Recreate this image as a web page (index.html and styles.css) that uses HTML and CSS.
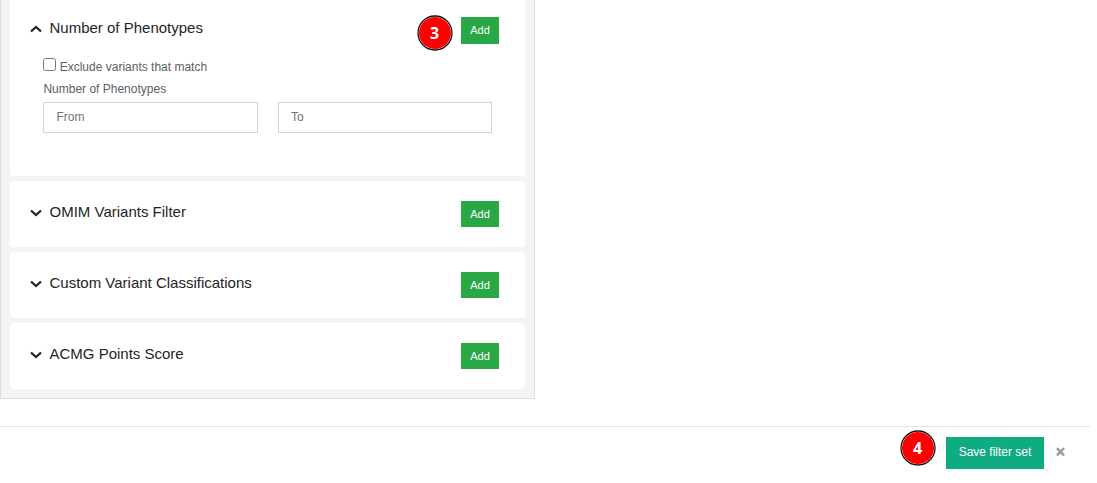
FILE: index.html
```html
<!DOCTYPE html>
<html lang="en">
<head>
<meta charset="utf-8">
<title>Filter set</title>
<link rel="stylesheet" href="styles.css">
</head>
<body>
<main class="panel">
  <section class="card card-open">
    <header class="card-head">
      <svg class="chevron" viewBox="0 0 12 8"><path d="M1 6.500 6 2l5 4.500"/></svg>
      <h2 class="title">Number of Phenotypes</h2>
      <svg class="step step-add" viewBox="0 0 36 36"><circle class="halo" cx="18" cy="18" r="17"/><circle class="disc" cx="18" cy="18" r="16"/><text class="digit" x="17.700" y="23.800">3</text></svg>
      <button class="add">Add</button>
    </header>
    <div class="card-body">
      <label class="check"><input class="box" type="checkbox"><span>Exclude variants that match</span></label>
      <div class="label">Number of Phenotypes</div>
      <div class="range">
        <input class="field field-from" type="text" placeholder="From">
        <input class="field" type="text" placeholder="To">
      </div>
    </div>
  </section>
  <section class="card">
    <header class="card-head">
      <svg class="chevron" viewBox="0 0 12 8"><path d="M1 1.500 6 6l5-4.500"/></svg>
      <h2 class="title">OMIM Variants Filter</h2>
      <button class="add">Add</button>
    </header>
  </section>
  <section class="card">
    <header class="card-head">
      <svg class="chevron" viewBox="0 0 12 8"><path d="M1 1.500 6 6l5-4.500"/></svg>
      <h2 class="title">Custom Variant Classifications</h2>
      <button class="add">Add</button>
    </header>
  </section>
  <section class="card">
    <header class="card-head">
      <svg class="chevron" viewBox="0 0 12 8"><path d="M1 1.500 6 6l5-4.500"/></svg>
      <h2 class="title">ACMG Points Score</h2>
      <button class="add">Add</button>
    </header>
  </section>
</main>
<footer class="footer">
  <svg class="step step-save" viewBox="0 0 36 36"><circle class="halo" cx="18" cy="18" r="17"/><circle class="disc" cx="18" cy="18" r="16"/><text class="digit" x="17.700" y="23.800">4</text></svg>
  <button class="save">Save filter set</button>
  <button class="close" aria-label="Close"><svg class="cross" viewBox="0 0 10 10"><path d="M1 1.300l8 8M9 1.300l-8 8"/></svg></button>
</footer>
</body>
</html>
```
FILE: styles.css
```css
* { box-sizing: border-box; }

body {
  margin: 0;
  height: 483px;
  overflow: hidden;
  background: #fff;
  color: #212529;
  font-family: "Liberation Sans", Arial, sans-serif;
  font-size: 12px;
}

.panel {
  display: flex;
  flex-direction: column;
  gap: 5px;
  width: 535px;
  height: 399px;
  padding: 0 9px 9px;
  background: #f4f4f4;
  border: 1px solid #dedede;
  border-top: 0;
}

.card {
  height: 66px;
  padding: 20px 26px 0 20px;
  background: #fff;
  border-radius: 4px;
}

.card-open {
  height: 176px;
  padding-top: 17px;
  border-radius: 0 0 4px 4px;
}

.card-head {
  display: flex;
  align-items: flex-start;
  height: 26px;
}

.card-open .card-head { height: 27px; }

.chevron {
  width: 12px;
  height: 8px;
  margin: 8px 7.500px 0 0;
  fill: none;
  stroke: #212529;
  stroke-width: 2.300;
}

.title {
  flex: 1;
  margin: 2px 0 0;
  font-size: 15px;
  font-weight: 400;
  line-height: 18px;
}

.add {
  width: 38px;
  height: 100%;
  padding: 0;
  border: 0;
  background: #28a745;
  color: #fff;
  font: 11px/26px "Liberation Sans", Arial, sans-serif;
}

.card-open .add { padding-bottom: 1px; }

.step {
  flex: none;
  width: 36px;
  height: 36px;
}

.step-add { margin: -2px 8px 0 0; }
.step-save { margin: 3px 10px 0 0; }

.halo {
  fill: #fff;
  stroke: #111;
  stroke-width: 1.300;
}

.disc { fill: #f00; }

.digit {
  fill: #fff;
  font: 700 16px "Open Sans", sans-serif;
  text-anchor: middle;
}

.card-body { padding: 14px 7px 0 13px; color: #5b5f63; }

.check {
  display: flex;
  height: 19px;
}

.check span { margin-top: 2px; line-height: 14px; }

.box {
  width: 13px;
  height: 13px;
  margin: 0 3.700px 0 0;
}

.label {
  margin-top: 5px;
  padding-left: 0.400px;
  height: 20px;
  line-height: 14px;
}

.range {
  display: grid;
  grid-template-columns: 215px 214px;
  gap: 20px;
}

.field {
  width: 100%;
  height: 31px;
  padding: 0 12px 1px;
  border: 1px solid #ced4da;
  border-radius: 0;
  background: #fff;
  font: 12px "Liberation Sans", Arial, sans-serif;
}

.field-from { padding-left: 12.400px; }

.field::placeholder { color: #6c757d; }

.footer {
  display: flex;
  align-items: flex-start;
  justify-content: flex-end;
  width: 1090px;
  margin-top: 27px;
  border-top: 1px solid #e3e3e3;
  padding-right: 25px;
}

.save {
  width: 98px;
  height: 32px;
  margin: 10px 12px 0 0;
  padding: 0 0 2px;
  border: 0;
  background: #0fac81;
  color: #fff;
  font: 12px "Liberation Sans", Arial, sans-serif;
}

.close {
  display: flex;
  width: 9px;
  height: 9px;
  margin-top: 20px;
  padding: 0;
  border: 0;
  background: none;
}

.cross {
  width: 9px;
  height: 9px;
  overflow: visible;
  fill: none;
  stroke: #999;
  stroke-width: 2.600;
}
```
